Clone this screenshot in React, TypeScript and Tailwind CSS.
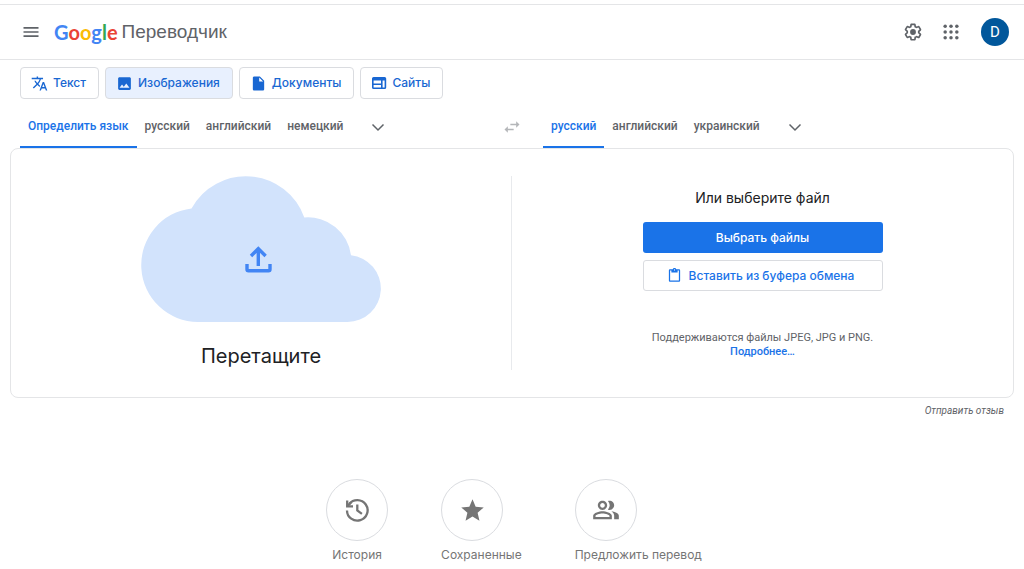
import React from 'react';
import {
  MdContentPaste,
  MdImage,
  MdInsertDriveFile,
  MdMenu,
  MdOutlinePeopleAlt,
  MdStar,
  MdSwapHoriz,
  MdTranslate,
} from 'react-icons/md';

interface Mode {
  label: string;
  icon: React.ReactNode;
}

interface LanguageTabsProps {
  label: string;
  languages: string[];
}

interface Shortcut {
  label: string;
  icon: React.ReactNode;
}

const GearIcon = () => (
  <svg className="size-5" viewBox="0 0 24 24" fill="currentColor" aria-hidden="true">
    <path d="M13.85 22.25h-3.7c-.74 0-1.36-.54-1.45-1.27l-.27-1.89c-.27-.14-.53-.29-.79-.46l-1.8.72c-.7.26-1.47-.03-1.81-.65L2.2 15.53c-.35-.66-.2-1.44.36-1.88l1.53-1.19c-.01-.15-.02-.3-.02-.46 0-.15.01-.31.02-.46l-1.52-1.19c-.59-.45-.74-1.26-.37-1.88l1.85-3.19c.34-.62 1.11-.9 1.79-.63l1.81.73c.26-.17.52-.32.78-.46l.27-1.91c.09-.7.71-1.25 1.44-1.25h3.7c.74 0 1.36.54 1.45 1.27l.27 1.89c.27.14.53.29.79.46l1.8-.72c.71-.26 1.48.03 1.82.65l1.84 3.18c.36.66.2 1.44-.36 1.88l-1.52 1.19c.01.15.02.3.02.46s-.01.31-.02.46l1.52 1.19c.56.45.72 1.23.37 1.86l-1.86 3.22c-.34.62-1.11.9-1.8.63l-1.8-.72c-.26.17-.52.32-.78.46l-.27 1.91c-.1.68-.72 1.22-1.46 1.22zm-3.23-2h2.76l.37-2.55.53-.22c.44-.18.88-.44 1.34-.78l.45-.34 2.38.96 1.38-2.4-2.03-1.58.07-.56c.03-.26.06-.51.06-.78s-.03-.53-.06-.78l-.07-.56 2.03-1.58-1.39-2.4-2.39.96-.45-.35c-.42-.32-.87-.58-1.33-.77l-.52-.22-.37-2.55h-2.76l-.37 2.55-.53.21c-.44.19-.88.44-1.34.79l-.45.33-2.38-.95-1.39 2.39 2.03 1.58-.07.56a7 7 0 0 0-.06.79c0 .26.02.53.06.78l.07.56-2.03 1.58 1.38 2.4 2.39-.96.45.35c.43.33.86.58 1.33.77l.53.22.38 2.55z" />
    <circle cx="12" cy="12" r="3.5" />
  </svg>
);

const AppsIcon = () => (
  <svg className="size-5" viewBox="0 0 24 24" fill="currentColor" aria-hidden="true">
    {[5, 12, 19].map((y) => [5, 12, 19].map((x) => <circle key={`${x}-${y}`} cx={x} cy={y} r="2.1" />))}
  </svg>
);

const ChevronIcon = () => (
  <svg className="size-4" viewBox="0 0 16 16" fill="none" stroke="currentColor" strokeWidth="1.5" aria-hidden="true">
    <path d="M2.5 5.5 8 11l5.5-5.5" />
  </svg>
);

const SiteIcon = () => (
  <svg className="size-4" viewBox="0 0 16 16" fill="none" stroke="currentColor" strokeWidth="1.6" aria-hidden="true">
    <rect x="1.8" y="2.8" width="12.6" height="10.4" rx="0.8" />
    <path d="M1.8 4.2h12.6" strokeWidth="2.6" />
    <path d="M2 9.2h8.6M10.8 5v8" />
  </svg>
);

const HistoryIcon = () => (
  <svg className="size-[26px]" viewBox="0 0 26 26" fill="none" stroke="currentColor" strokeWidth="2.3" aria-hidden="true">
    <path d="M3 13.4A10.3 10.3 0 1 0 5.2 7" />
    <path d="M3.2 3.6v5.8H9" />
    <path d="M3.6 9 7 5.4" />
    <path d="M13.3 7.4v6l4.6 3.4" />
  </svg>
);

// Cloud with the upload arrow in the middle of it
const CloudUpload = () => (
  <svg className="h-[146px] w-60" viewBox="0 0 240 146" aria-hidden="true">
    <path
      fill="#d2e3fc"
      d="M57 146A57 57 0 0 1 50.5 32.4A62 62 0 0 1 163.3 41.5A43.3 43.3 0 0 1 210 79.2A33.5 33.5 0 0 1 206.5 146Z"
    />
    <g fill="none" stroke="#4285f4" strokeWidth="3.4">
      <path d="M117.3 90V73.5M110 80l7.3-7.3 7.3 7.3" />
      <path d="M106 88v5.2q0 1.5 1.5 1.5h20q1.5 0 1.5-1.5V88" />
    </g>
  </svg>
);

const GoogleLogo = () => (
  <span className="font-['Lato'] text-xl leading-7 font-bold">
    <span className="text-[#4285f4]">G</span>
    <span className="text-[#ea4335]">o</span>
    <span className="text-[#fbbc05]">o</span>
    <span className="text-[#4285f4]">g</span>
    <span className="text-[#34a853]">l</span>
    <span className="text-[#ea4335]">e</span>
  </span>
);

const modes: Mode[] = [
  { label: 'Текст', icon: <MdTranslate size={17} /> },
  { label: 'Изображения', icon: <MdImage size={17} /> },
  { label: 'Документы', icon: <MdInsertDriveFile size={17} /> },
  { label: 'Сайты', icon: <SiteIcon /> },
];

const sourceLanguages = ['Определить язык', 'русский', 'английский', 'немецкий'];
const targetLanguages = ['русский', 'английский', 'украинский'];

const shortcuts: Shortcut[] = [
  { label: 'История', icon: <HistoryIcon /> },
  { label: 'Сохраненные', icon: <MdStar size={27} /> },
  { label: 'Предложить перевод', icon: <MdOutlinePeopleAlt size={28} /> },
];

const Header = () => (
  <header className="flex h-14 items-center border-y border-[#e4e5e7] pr-[15px] pl-[21px] text-[#5f6368]">
    <button type="button" aria-label="Главное меню">
      <MdMenu size={20} />
    </button>
    <a href="#" className="ml-[13px] flex items-center gap-1">
      <GoogleLogo />
      <span className="font-['Liberation_Sans',sans-serif] text-[19px] leading-7">Переводчик</span>
    </a>
    <div className="ml-auto flex items-center gap-[18px]">
      <button type="button" aria-label="Настройки">
        <GearIcon />
      </button>
      <button type="button" className="mr-[2px]" aria-label="Приложения">
        <AppsIcon />
      </button>
      <button type="button" className="size-7 rounded-full bg-[#01579b] font-['Roboto'] text-[15px] text-white">
        D
      </button>
    </div>
  </header>
);

// The first language of the list is the selected one
const LanguageTabs: React.FC<LanguageTabsProps> = ({ label, languages }) => (
  <div className="flex flex-1 items-center text-[#5f6368]" role="group" aria-label={label}>
    {languages.map((language, index) => (
      <button
        key={language}
        type="button"
        className={`h-[42px] border-b-2 px-2 font-['Roboto',sans-serif] text-xs font-medium whitespace-nowrap ${
          index === 0 ? 'border-[#1a73e8] text-[#1a73e8]' : 'border-transparent'
        }`}
      >
        {language}
      </button>
    ))}
    <button type="button" className="ml-[19px]" aria-label="Другие языки">
      <ChevronIcon />
    </button>
  </div>
);

const ImagePanel = () => (
  <section className="mx-[10px] grid grid-cols-2 rounded-lg border border-[#e4e5e7] py-[27px]">
    <div className="flex flex-col items-center border-r border-[#e8eaed]">
      <CloudUpload />
      <p className="mt-5 text-xl leading-7 text-[#202124]">Перетащите</p>
    </div>
    <div className="flex flex-col items-center pt-3">
      <h2 className="text-sm leading-5 text-[#202124]">Или выберите файл</h2>
      <div className="mt-[14px] flex w-60 flex-col gap-[7px] text-xs font-medium">
        <button type="button" className="h-[31px] rounded-[3px] bg-[#1a73e8] text-white">
          Выбрать файлы
        </button>
        <button
          type="button"
          className="flex h-[31px] items-center justify-center gap-[7px] rounded-[3px] border border-[#dadce0] pr-1 text-[#1a73e8]"
        >
          <MdContentPaste size={15} />
          Вставить из буфера обмена
        </button>
      </div>
      <div className="mt-10 text-center font-['Roboto',sans-serif] text-[11px] leading-[14px] text-[#5f6368]">
        <p>Поддерживаются файлы JPEG, JPG и PNG.</p>
        <a href="#" className="font-medium text-[#1a73e8]">
          Подробнее…
        </a>
      </div>
    </div>
  </section>
);

const App = () => (
  <div className="bg-white pt-1 font-['Inter',sans-serif]">
    <Header />
    <main>
      <nav className="flex gap-[6px] px-5 pt-[7px]" aria-label="Тип перевода">
        {modes.map((mode) => (
          <button
            key={mode.label}
            type="button"
            className={`flex h-8 items-center gap-[5px] rounded border border-[#dadce0] pr-3 pl-[10px] text-xs font-medium text-[#1967d2] ${
              mode.label === 'Изображения' ? 'bg-[#e8f0fe]' : ''
            }`}
          >
            {mode.icon}
            {mode.label}
          </button>
        ))}
      </nav>
      <div className="flex items-center px-5 pt-[7px]">
        <LanguageTabs label="Язык оригинала" languages={sourceLanguages} />
        <button type="button" className="flex w-[62px] justify-center text-[#b4b6b9]" aria-label="Поменять языки местами">
          <MdSwapHoriz size={20} />
        </button>
        <LanguageTabs label="Язык перевода" languages={targetLanguages} />
      </div>
      <ImagePanel />
      <div className="mt-[6px] flex justify-end px-5">
        <a href="#" className="font-['Roboto',sans-serif] text-[10px] leading-[14px] text-[#5f6368] italic">
          Отправить отзыв
        </a>
      </div>
      <div className="mt-[61px] flex justify-center gap-[53px] pl-1 text-[#757575]">
        {shortcuts.map((shortcut) => (
          <button key={shortcut.label} type="button" className="flex flex-col items-start text-xs">
            <span className="flex size-[62px] items-center justify-center rounded-full border border-[#dadce0]">
              {shortcut.icon}
            </span>
            <span className="mt-[6px] min-w-[62px] text-center leading-4">{shortcut.label}</span>
          </button>
        ))}
      </div>
    </main>
  </div>
);

export default App;
